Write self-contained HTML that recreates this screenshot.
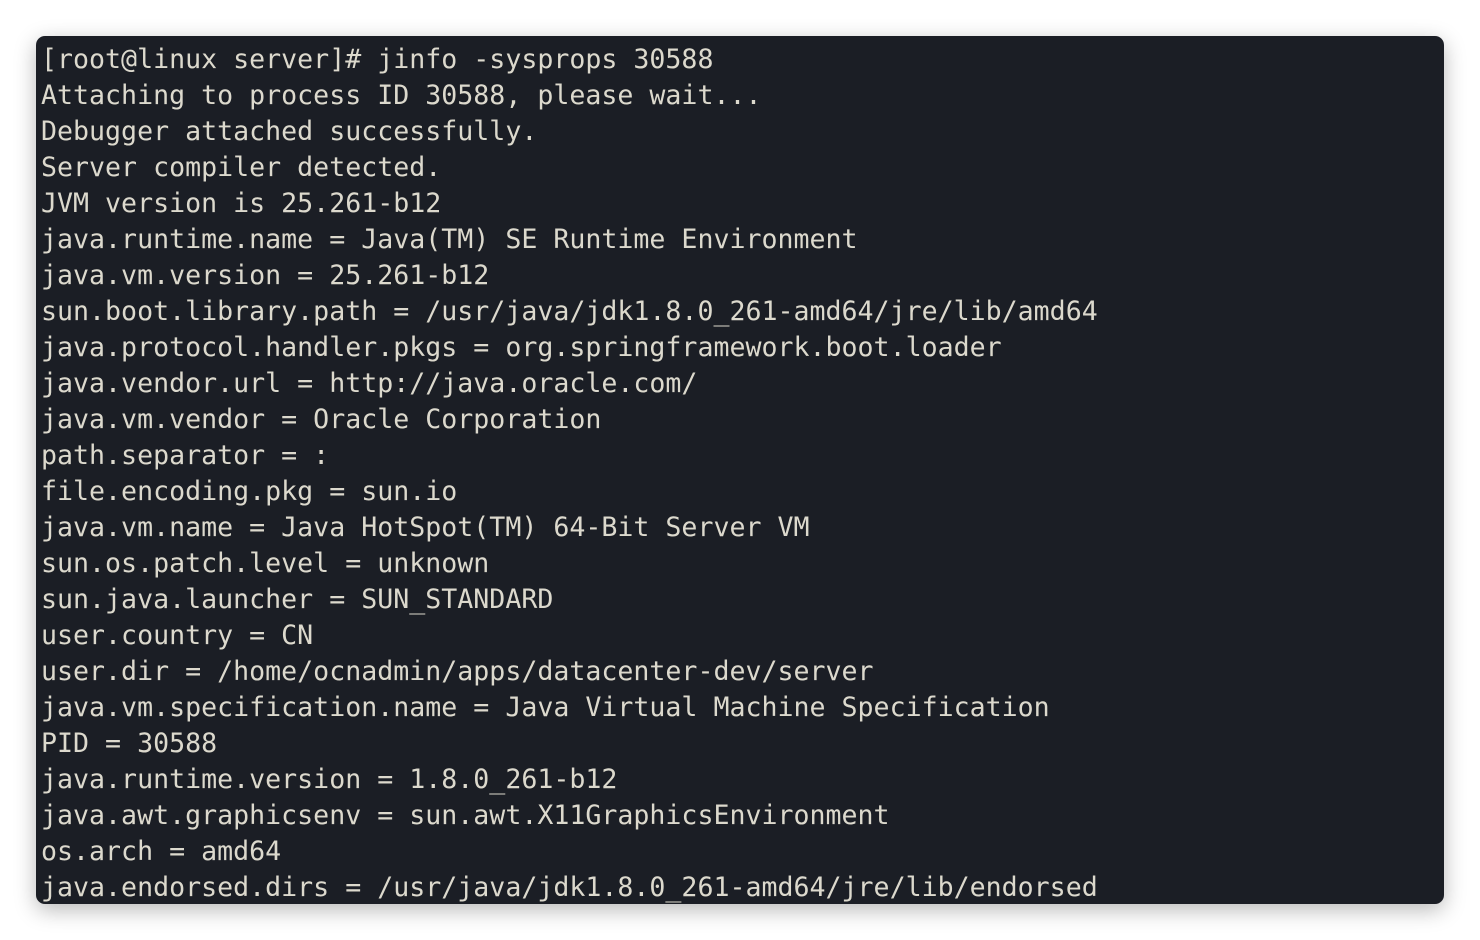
<!DOCTYPE html>
<html><head><meta charset="utf-8"><style>
html,body{margin:0;padding:0;background:#fff;width:1480px;height:940px;overflow:hidden}
.term{position:absolute;left:36px;top:36px;width:1408px;height:868px;background:#1b1e25;border-radius:9px;box-shadow:0 6px 22px rgba(0,0,0,0.28);overflow:hidden}
pre{margin:0;position:absolute;left:5px;top:6px;font-family:"DejaVu Sans Mono","Liberation Mono",monospace;font-size:26.6px;line-height:36px;color:#dcd9cd;white-space:pre}
</style></head><body>
<div class="term"><pre>[root@linux server]# jinfo -sysprops 30588
Attaching to process ID 30588, please wait...
Debugger attached successfully.
Server compiler detected.
JVM version is 25.261-b12
java.runtime.name = Java(TM) SE Runtime Environment
java.vm.version = 25.261-b12
sun.boot.library.path = /usr/java/jdk1.8.0_261-amd64/jre/lib/amd64
java.protocol.handler.pkgs = org.springframework.boot.loader
java.vendor.url = http://java.oracle.com/
java.vm.vendor = Oracle Corporation
path.separator = :
file.encoding.pkg = sun.io
java.vm.name = Java HotSpot(TM) 64-Bit Server VM
sun.os.patch.level = unknown
sun.java.launcher = SUN_STANDARD
user.country = CN
user.dir = /home/ocnadmin/apps/datacenter-dev/server
java.vm.specification.name = Java Virtual Machine Specification
PID = 30588
java.runtime.version = 1.8.0_261-b12
java.awt.graphicsenv = sun.awt.X11GraphicsEnvironment
os.arch = amd64
java.endorsed.dirs = /usr/java/jdk1.8.0_261-amd64/jre/lib/endorsed</pre></div>
</body></html>
